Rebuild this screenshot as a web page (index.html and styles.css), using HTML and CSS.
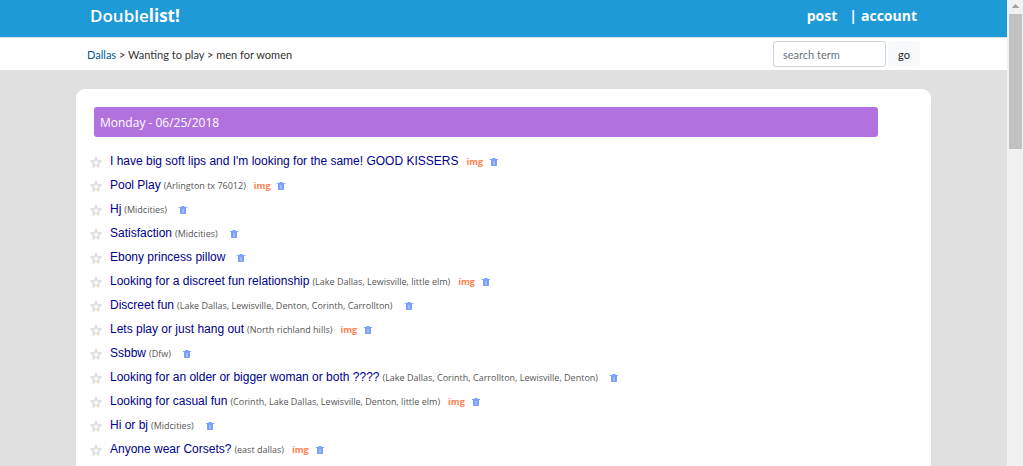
FILE: index.html
```html
<!DOCTYPE html>
<html lang="en">
<head>
    <meta charset="UTF-8">
    <meta name="viewport" content="width=device-width, initial-scale=1.0">
    <title>Doublelist - Dallas</title>
    <link rel="stylesheet" href="styles.css">
</head>
<body>
    <svg class="symbols" aria-hidden="true">
        <symbol id="star" viewBox="0 0 12 12">
            <path d="M6 1.2l1.4 3.4 3.7.3-2.8 2.4.9 3.6L6 9l-3.2 1.9.9-3.6L.9 4.9l3.7-.3z" fill="#f6f6f6" stroke="#d8d8d8" stroke-width="1.3" stroke-linejoin="round"/>
        </symbol>
        <symbol id="trash" viewBox="0 0 8 8">
            <path d="M2.5 0h3v1H8v1H0V1h2.5z" fill="#7a9ff8"/>
            <path d="M1 2h6v5.2a.8.8 0 0 1-.8.8H1.8a.8.8 0 0 1-.8-.8z" fill="#7a9ff8"/>
            <path d="M3 3h2v4H3z" fill="#a3baff"/>
        </symbol>
    </svg>
    <div class="page">
        <header class="topbar">
            <div class="container topbar-inner">
                <a class="logo" href="#">Double<b>list!</b></a>
                <nav class="menu">
                    <a href="#">post</a>
                    <span class="divider">|</span>
                    <a href="#">account</a>
                </nav>
            </div>
        </header>
        <div class="subbar">
            <div class="container subbar-inner">
                <div class="breadcrumb"><a href="#">Dallas</a> &gt; Wanting to play &gt; men for women</div>
                <form class="search">
                    <input type="text" placeholder="search term" aria-label="search term">
                    <button type="submit">go</button>
                </form>
            </div>
        </div>
        <main class="container panel">
            <h2 class="date">Monday - 06/25/2018</h2>
            <ul class="posts" id="posts"></ul>
        </main>
    </div>
    <div class="scrollbar" aria-hidden="true">
        <div class="arrow"></div>
        <div class="thumb"></div>
    </div>
    <script src="script.js"></script>
</body>
</html>
```
FILE: styles.css
```css
* {
    box-sizing: border-box;
}
body {
    margin: 0;
    display: flex;
    height: 100vh;
    overflow: hidden;
    background-color: #e0e0e0;
    font-family: "Open Sans", "Noto Sans", sans-serif;
    font-size: 12px;
    color: #333;
}
a {
    text-decoration: none;
}
.symbols {
    display: none;
}
.page {
    flex: 1;
    min-width: 0;
    overflow: hidden;
}
.container {
    max-width: 855px;
    margin: 0 auto;
}
.topbar {
    background-color: #1e9ad7;
    border-bottom: 1px solid #d5e3ea;
}
.topbar-inner {
    display: flex;
    justify-content: space-between;
    align-items: center;
    height: 37px;
    padding: 0 14px 7px;
}
.topbar a, .divider {
    color: white;
}
.logo {
    font-size: 17px;
    font-weight: 600;
}
.logo b {
    font-weight: 700;
}
.menu {
    display: flex;
    font-size: 14px;
    font-weight: 700;
}
.divider {
    margin: 0 4px 0 12px;
}
.subbar {
    background-color: white;
    font-family: Lato, "Open Sans", sans-serif;
    font-size: 11px;
}
.subbar-inner {
    display: flex;
    justify-content: space-between;
    align-items: center;
    height: 32px;
    padding: 0 11px;
}
.breadcrumb a {
    color: #005b96;
}
.search {
    display: flex;
    gap: 2px;
}
.search input {
    width: 113px;
    height: 26px;
    padding: 0 9px;
    border: 1px solid #ced4da;
    border-radius: 3px;
    font: inherit;
}
.search input::placeholder {
    color: #6c757d;
}
.search button {
    width: 32px;
    height: 26px;
    padding: 0;
    border: none;
    border-radius: 3px;
    background-color: #f8f9fa;
    color: #212529;
    font: inherit;
}
.panel {
    margin-top: 19px;
    min-height: 100vh;
    padding: 18px 14px;
    border-radius: 9px;
    background-color: white;
}
.date {
    height: 30px;
    margin: 0 39px 12px 4px;
    padding: 0 6px;
    border-radius: 3px;
    background-color: #b172de;
    color: white;
    font-size: 12px;
    font-weight: 400;
    line-height: 31px;
}
.posts {
    margin: 0;
    padding: 0;
    list-style: none;
}
.post {
    display: flex;
    align-items: center;
    height: 24px;
}
.post button {
    display: flex;
    padding: 1px 0 0;
    border: none;
    background: none;
    cursor: pointer;
}
.post .star {
    margin-right: 8px;
}
.star svg {
    width: 12px;
    height: 12px;
}
.title {
    font-family: "Liberation Sans", Arial, sans-serif;
    font-size: 12px;
    color: #00008b;
}
.place {
    margin-left: 3px;
    font-size: 9px;
    color: #555;
}
.img {
    margin-left: 8px;
    font-size: 9px;
    font-weight: 700;
    color: #ff7f50;
}
.trash {
    margin-left: 12px;
}
.img + .trash {
    margin-left: 7px;
}
.trash svg {
    width: 8px;
    height: 8px;
}
.scrollbar {
    width: 16px;
    padding: 4px 1px 0 2px;
    background-color: #f1f1f1;
}
.arrow {
    width: 8px;
    height: 4px;
    margin: 0 auto 6px;
    background-color: #a3a3a3;
    clip-path: polygon(50% 0, 100% 100%, 0 100%);
}
.thumb {
    height: 135px;
    background-color: #c1c1c1;
}
```
FILE: script.js
```js
const posts = [
    { title: "I have big soft lips and I'm looking for the same! GOOD KISSERS", img: true },
    { title: 'Pool Play', place: 'Arlington tx 76012', img: true },
    { title: 'Hj', place: 'Midcities' },
    { title: 'Satisfaction', place: 'Midcities' },
    { title: 'Ebony princess pillow' },
    { title: 'Looking for a discreet fun relationship', place: 'Lake Dallas, Lewisville, little elm', img: true },
    { title: 'Discreet fun', place: 'Lake Dallas, Lewisville, Denton, Corinth, Carrollton' },
    { title: 'Lets play or just hang out', place: 'North richland hills', img: true },
    { title: 'Ssbbw', place: 'Dfw' },
    { title: 'Looking for an older or bigger woman or both ????', place: 'Lake Dallas, Corinth, Carrollton, Lewisville, Denton' },
    { title: 'Looking for casual fun', place: 'Corinth, Lake Dallas, Lewisville, Denton, little elm', img: true },
    { title: 'Hi or bj', place: 'Midcities' },
    { title: 'Anyone wear Corsets?', place: 'east dallas', img: true }
];

// Fill the list of posts
const list = document.getElementById('posts');
posts.forEach(post => {
    const row = document.createElement('li');
    row.className = 'post';
    row.innerHTML = `
        <button class="star" type="button" aria-label="Favorite"><svg><use href="#star"/></svg></button>
        <a class="title" href="#">${post.title}</a>
        ${post.place ? `<span class="place">(${post.place})</span>` : ''}
        ${post.img ? '<span class="img">img</span>' : ''}
        <button class="trash" type="button" aria-label="Hide"><svg><use href="#trash"/></svg></button>
    `;
    list.appendChild(row);
});
```
